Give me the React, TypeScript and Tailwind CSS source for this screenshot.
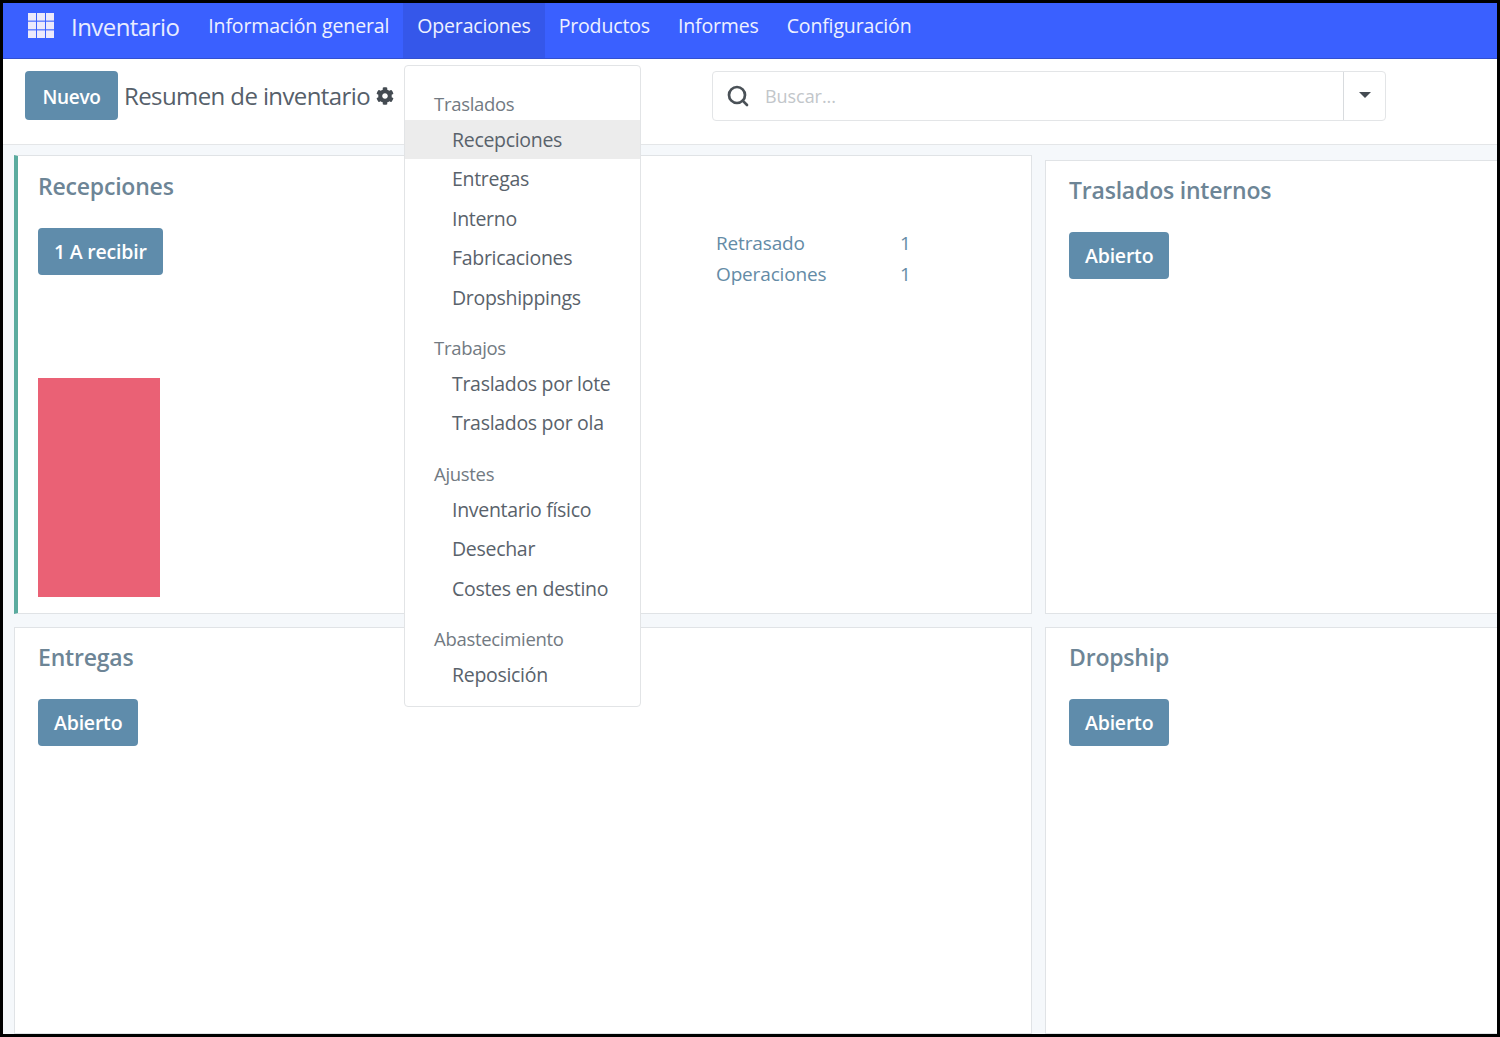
import React from 'react';
import { FaCog } from 'react-icons/fa';
import { Search } from 'lucide-react';

const NAV_ITEMS = ['Información general', 'Operaciones', 'Productos', 'Informes', 'Configuración'];

const MENU = [
  { title: 'Traslados', items: ['Recepciones', 'Entregas', 'Interno', 'Fabricaciones', 'Dropshippings'] },
  { title: 'Trabajos', items: ['Traslados por lote', 'Traslados por ola'] },
  { title: 'Ajustes', items: ['Inventario físico', 'Desechar', 'Costes en destino'] },
  { title: 'Abastecimiento', items: ['Reposición'] },
];

const AppsIcon = () => (
  <svg width="26" height="25" viewBox="0 0 26 25" fill="#ece9fb">
    {[0, 8.7, 17.4].map((y) =>
      [0, 9, 18].map((x) => <rect key={`${x}-${y}`} x={x} y={y} width="8" height="7.6" />),
    )}
  </svg>
);

const CardButton = ({ label }: { label: string }) => (
  <button className="h-[47px] rounded-[4px] bg-[#5f8cab] px-[16px] pt-[1px] text-[19.5px] font-semibold tracking-[-0.2px] text-white">
    {label}
  </button>
);

const CardTitle = ({ children }: { children: React.ReactNode }) => (
  <h2 className="mb-[25px] h-[32px] text-[23px] leading-[30px] font-semibold tracking-[-0.2px] text-[#6d8596]">
    {children}
  </h2>
);

const App: React.FC = () => {
  return (
    <div className="relative flex h-[1037px] w-[1500px] flex-col overflow-hidden border-[3px] border-black bg-white font-['Open_Sans',sans-serif]">
      {/* Navbar */}
      <nav className="flex h-[56px] shrink-0 items-stretch border-b border-[#3350d0] bg-[#3a60ff] text-[#eef1ff]">
        <div className="flex items-center pb-[11px] pl-[25px]">
          <AppsIcon />
        </div>
        <div className="ml-[17px] flex items-center pb-[7px] text-[24px] tracking-[-0.55px] text-[#e8ecff]">Inventario</div>
        <div className="ml-[15px] flex items-stretch">
          {NAV_ITEMS.map((item) => (
            <div
              key={item}
              className={
                item === 'Operaciones'
                  ? 'flex items-center bg-[#3557ea] px-[14px] pb-[9px] text-[19.5px] tracking-[-0.15px]'
                  : 'flex items-center px-[14px] pb-[9px] text-[19.5px] tracking-[-0.15px]'
              }
            >
              {item}
            </div>
          ))}
        </div>
      </nav>

      {/* Control panel */}
      <div className="flex h-[86px] shrink-0 items-start border-b border-[#e4e6e8] pt-[12px] pl-[22px]">
        <button className="h-[49px] w-[93px] rounded-[4px] bg-[#5f8cab] pt-[3px] text-[19px] font-semibold tracking-[-0.3px] text-white">
          Nuevo
        </button>
        <div className="ml-[6px] flex h-[49px] w-[271px] items-center pt-[1px] text-[24px] tracking-[-0.6px] whitespace-nowrap text-[#56606a]">
          Resumen de inventario
          <FaCog className="ml-[6px] shrink-0 text-[18px] text-[#444b52]" />
        </div>
        <div className="ml-[317px] flex h-[50px] w-[674px] items-stretch rounded-[4px] border border-[#e3e5e7]">
          <div className="flex flex-1 items-center pl-[13px]">
            <Search size={24} strokeWidth={2.7} className="text-[#4a5157]" />
            <span className="ml-[15px] text-[18px] tracking-[-0.05px] text-[#c2c6ca]">Buscar...</span>
          </div>
          <div className="flex w-[42px] items-center justify-center border-l border-[#d8dbde]">
            <div className="mb-[3px] h-0 w-0 border-x-[6px] border-t-[6px] border-x-transparent border-t-[#444b52]" />
          </div>
        </div>
      </div>

      {/* Cards */}
      <div className="flex flex-1 flex-col gap-[13px] overflow-hidden bg-[#f5f8fb] pt-[10px] pl-[11px]">
        <div className="grid h-[459px] shrink-0 grid-cols-[1018px_1fr] items-end gap-x-[13px]">
          <section className="h-[459px] border border-l-[4px] border-[#e0e3e6] border-l-[#5aab9f] bg-white pt-[15px] pl-[20px]">
            <CardTitle>Recepciones</CardTitle>
            <div className="flex">
              <div className="w-[678px]">
                <CardButton label="1 A recibir" />
                <div className="mt-[103px] h-[219px] w-[122px] bg-[#ea6175]" />
              </div>
              <div className="grid h-[62px] grid-cols-[184px_auto] auto-rows-[31px] items-center text-[19px] tracking-[-0.15px] text-[#648ba6]">
                <span>Retrasado</span>
                <span>1</span>
                <span>Operaciones</span>
                <span>1</span>
              </div>
            </div>
          </section>
          <section className="h-[454px] border border-r-0 border-[#e0e3e6] bg-white pt-[14px] pl-[23px]">
            <CardTitle>Traslados internos</CardTitle>
            <CardButton label="Abierto" />
          </section>
        </div>
        <div className="grid min-h-0 flex-1 grid-cols-[1018px_1fr] gap-x-[13px]">
          <section className="border border-[#e0e3e6] bg-white pt-[14px] pl-[23px]">
            <CardTitle>Entregas</CardTitle>
            <CardButton label="Abierto" />
          </section>
          <section className="border border-r-0 border-[#e0e3e6] bg-white pt-[14px] pl-[23px]">
            <CardTitle>Dropship</CardTitle>
            <CardButton label="Abierto" />
          </section>
        </div>
      </div>

      {/* Operaciones dropdown */}
      <div className="absolute top-[62px] left-[401px] h-[642px] w-[237px] rounded-[4px] border border-[#e2e4e6] bg-white pt-[23px]">
        {MENU.map((group, groupIndex) => (
          <div key={group.title} className={groupIndex > 0 ? 'mt-[16px]' : ''}>
            <div className="flex h-[31px] items-center pb-[1px] pl-[29px] text-[18.5px] tracking-[-0.3px] text-[#727a82]">
              {group.title}
            </div>
            {group.items.map((item) => (
              <div
                key={item}
                className={
                  item === 'Recepciones'
                    ? 'flex h-[39.4px] items-center bg-[#ececec] pl-[47px] text-[19.5px] tracking-[-0.3px] text-[#59626b]'
                    : 'flex h-[39.4px] items-center pl-[47px] text-[19.5px] tracking-[-0.3px] text-[#59626b]'
                }
              >
                {item}
              </div>
            ))}
          </div>
        ))}
      </div>
    </div>
  );
};

export default App;
